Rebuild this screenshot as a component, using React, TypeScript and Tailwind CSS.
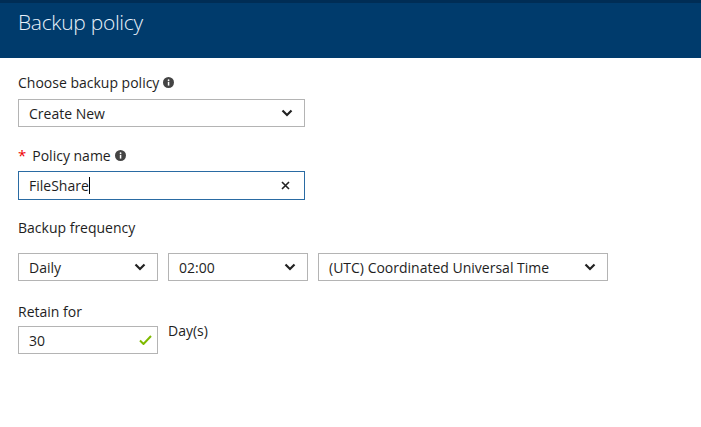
import React from 'react';

const font = { fontFamily: '"Open Sans", "Noto Sans", sans-serif' };

function InfoIcon() {
  return (
    <svg width="11" height="11" viewBox="0 0 16 16" className="ml-1 inline-block">
      <circle cx="8" cy="8" r="8" fill="#444" />
      <rect x="7" y="7" width="2.2" height="5.5" fill="#fff" />
      <circle cx="8.1" cy="4.6" r="1.3" fill="#fff" />
    </svg>
  );
}

function Chevron() {
  return (
    <svg width="12" height="8" viewBox="0 0 12 8">
      <path d="M1.5 1.5 L6 6 L10.5 1.5" fill="none" stroke="#222" strokeWidth="2.2" />
    </svg>
  );
}

function Select({ value, width }: { value: string; width: string }) {
  return (
    <div className={`${width} h-[28px] flex items-center justify-between border border-[#b4b4b4] bg-white pl-[10px] pr-[11px] text-[14px] text-[#1e1e1e]`}>
      <span>{value}</span>
      <Chevron />
    </div>
  );
}

export default function App() {
  return (
    <div className="w-[701px] h-[427px] bg-white text-[#1e1e1e]" style={font}>
      <div className="h-[58px] bg-[#003b6c] border-t-[3px] border-[#002d55] flex items-start pl-[18px]">
        <h1 className="text-[21px] font-light text-[#e8f1fa] leading-none mt-[9px] tracking-[-0.3px]">Backup policy</h1>
      </div>

      <div className="px-[18px] pt-[15px]">
        <div className="flex items-center text-[14px] h-[18px]">
          Choose backup policy <InfoIcon />
        </div>
        <div className="mt-[8px]">
          <Select value="Create New" width="w-[287px]" />
        </div>

        <div className="flex items-center text-[14px] h-[18px] mt-[19px]">
          <span className="text-[#e00] mr-[6px] text-[15px]">*</span>
          Policy name <InfoIcon />
        </div>
        <div className="mt-[7px] w-[287px] h-[29px] flex items-center justify-between border border-[#2a6ba3] pl-[10px] pr-[14px] text-[14px]">
          <span className="flex items-center">
            FileShare<span className="inline-block w-px h-[17px] bg-black" />
          </span>
          <svg width="9" height="9" viewBox="0 0 9 9">
            <path d="M1 1 L8 8 M8 1 L1 8" stroke="#222" strokeWidth="1.6" />
          </svg>
        </div>

        <div className="text-[14px] h-[18px] mt-[18px] flex items-center">Backup frequency</div>
        <div className="flex gap-[10px] mt-[17px]">
          <Select value="Daily" width="w-[140px]" />
          <Select value="02:00" width="w-[140px]" />
          <Select value="(UTC) Coordinated Universal Time" width="w-[290px]" />
        </div>

        <div className="text-[14px] h-[18px] mt-[21px] flex items-center">Retain for</div>
        <div className="flex gap-[10px] mt-[6px] items-start">
          <div className="w-[140px] h-[28px] flex items-center justify-between border border-[#b4b4b4] pl-[10px] pr-[5px] text-[14px]">
            <span>30</span>
            <svg width="13" height="10" viewBox="0 0 13 10">
              <path d="M1 5.5 L4.5 9 L12 1" fill="none" stroke="#7fba00" strokeWidth="2" />
            </svg>
          </div>
          <span className="text-[14px] -mt-[6px]">Day(s)</span>
        </div>
      </div>
    </div>
  );
}
